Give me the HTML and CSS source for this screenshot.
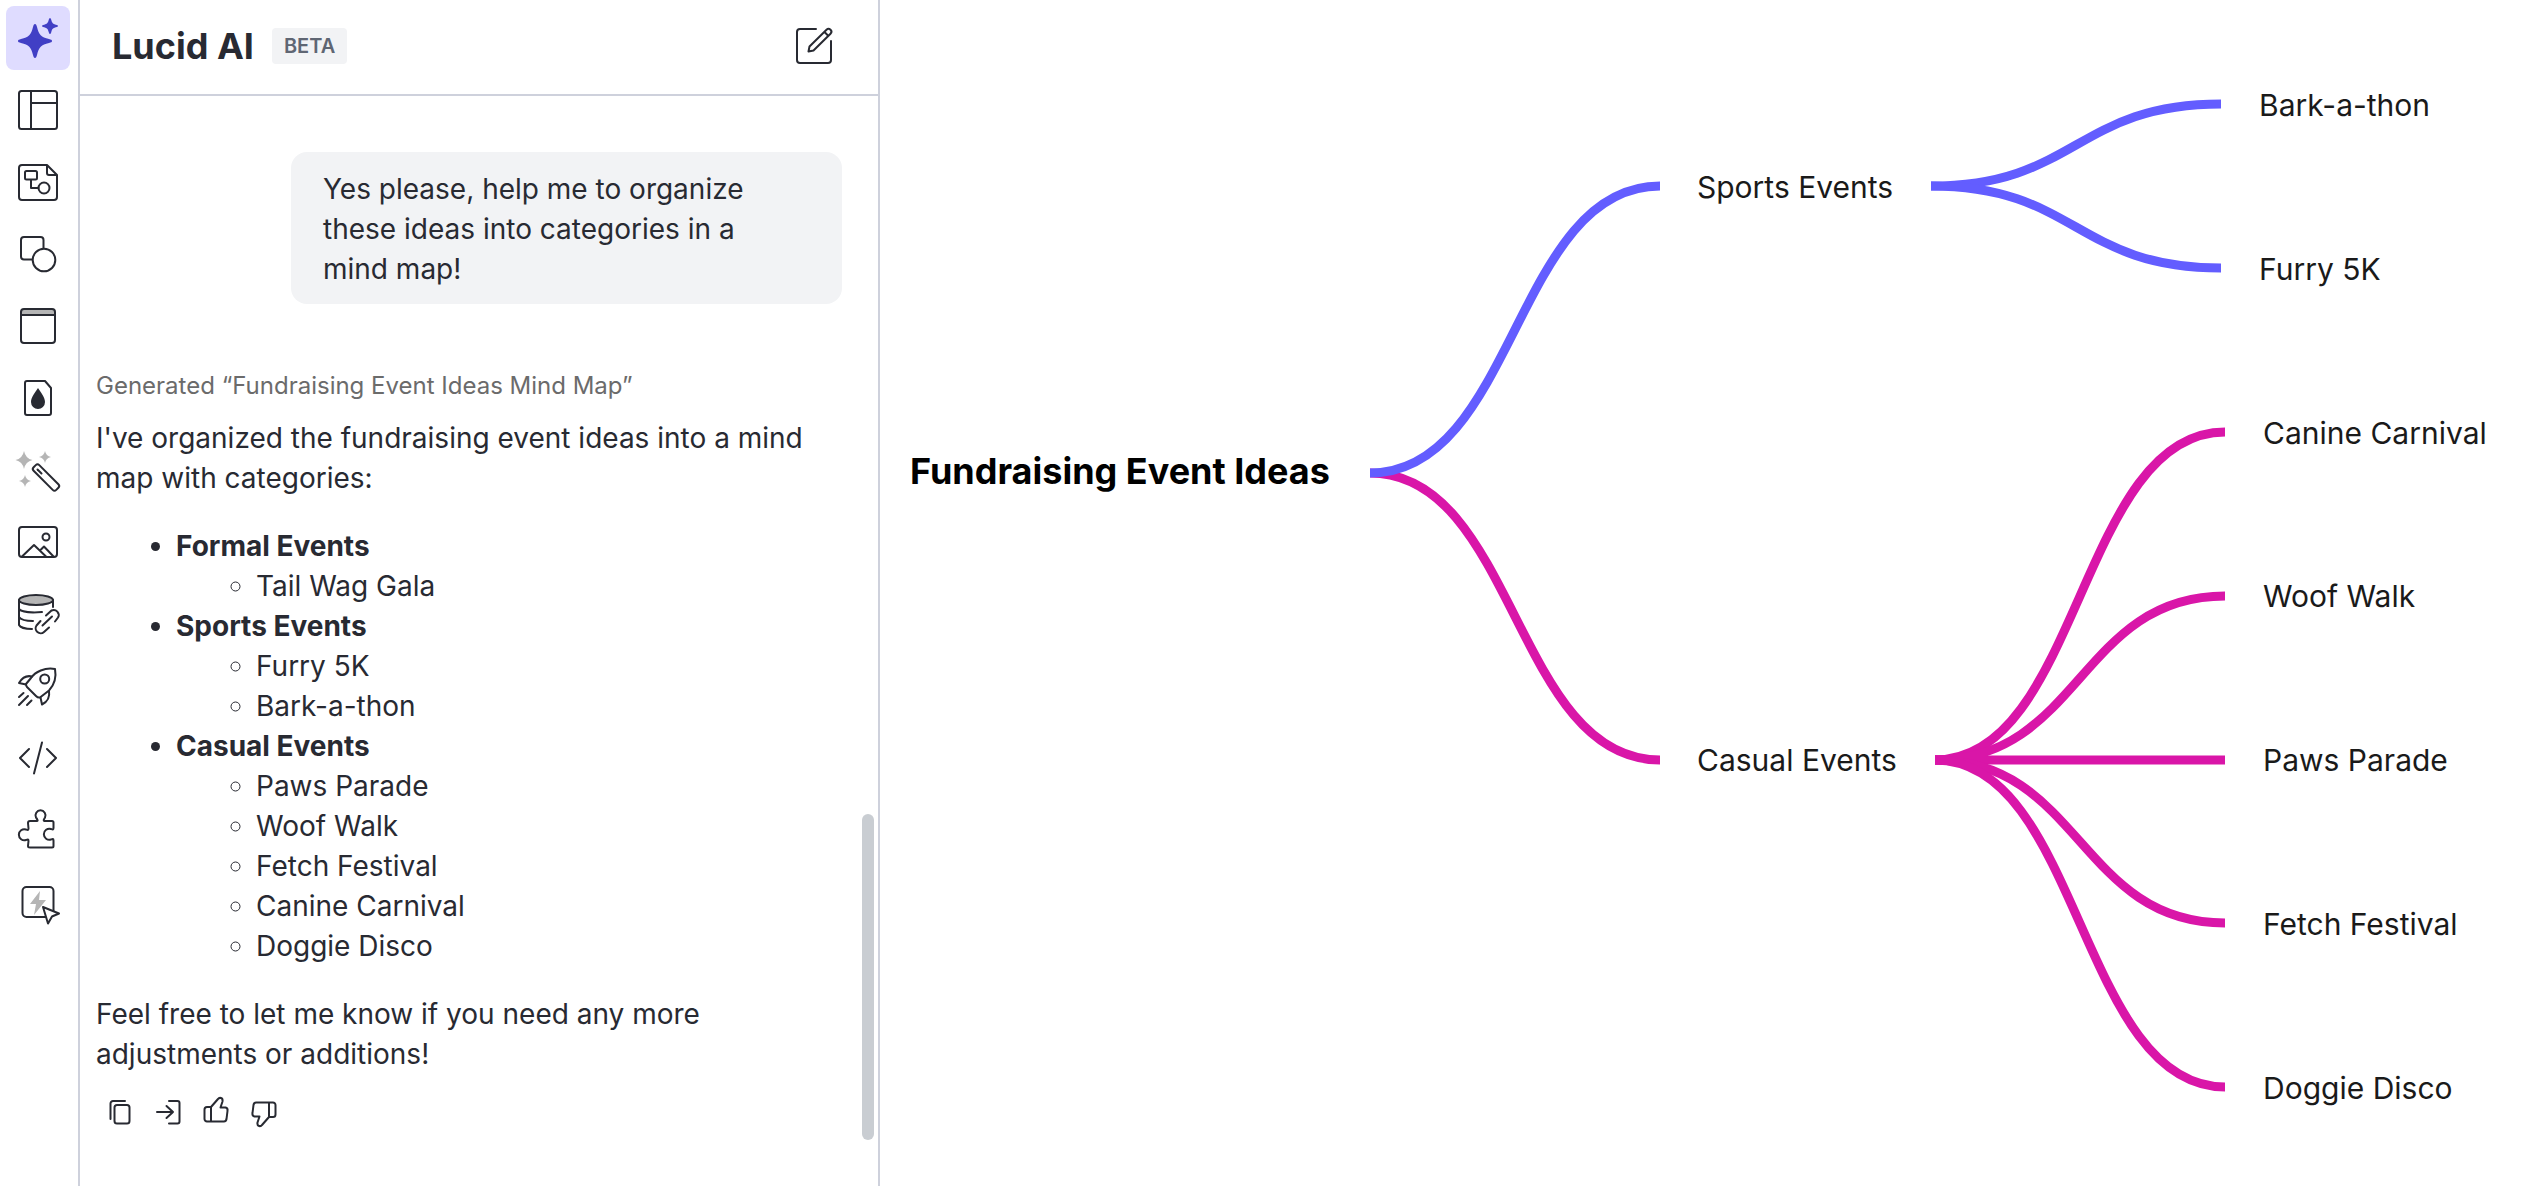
FILE: index.html
```html
<!DOCTYPE html>
<html lang="en">
<head>
    <meta charset="utf-8">
    <title>Lucid AI</title>
    <link rel="stylesheet" href="styles.css">
</head>
<body>
    <div class="app">
        <nav class="rail" aria-label="Tools">
            <button class="rail-button active" aria-label="Lucid AI">
                <svg viewBox="0 0 40 40"><path class="solid" d="M17 6c1 0 1.500 1 2 3 2 8 4 10 12 12 2 .5 3 1 3 2s-1 1.500-3 2c-8 2-10 4-12 12-.5 2-1 3-2 3s-1.500-1-2-3c-2-8-4-10-12-12-2-.5-3-1-3-2s1-1.500 3-2c8-2 10-4 12-12 .5-2 1-3 2-3z"/><path class="solid" d="M32 0c.7 0 1 1 1.300 2 .8 3 1.700 3.900 4.700 4.700 1 .3 2 .6 2 1.300s-1 1-2 1.300c-3 .8-3.900 1.700-4.700 4.700-.3 1-.6 2-1.300 2s-1-1-1.300-2c-.8-3-1.700-3.900-4.700-4.700-1-.3-2-.6-2-1.300s1-1 2-1.300c3-.8 3.900-1.700 4.700-4.700.3-1 .6-2 1.300-2z"/></svg>
            </button>
            <button class="rail-button" aria-label="Templates">
                <svg viewBox="0 0 40 40"><rect x="1" y="1" width="38" height="38" rx="2.500"/><path d="M13 1v38M13 13h26"/></svg>
            </button>
            <button class="rail-button" aria-label="Diagrams">
                <svg viewBox="0 0 40 40"><path d="M29 3H4a3 3 0 0 0-3 3v29a3 3 0 0 0 3 3h32a3 3 0 0 0 3-3V13zM29 3v8a2 2 0 0 0 2 2h8"/><rect x="7" y="9" width="12" height="8.500" rx="1.500"/><path d="M13 18v8h7.500"/><circle cx="26" cy="26" r="5.500"/></svg>
            </button>
            <button class="rail-button" aria-label="Shapes">
                <svg viewBox="0 0 40 40"><rect x="3" y="3" width="22.500" height="22.500" rx="3"/><circle class="paper" cx="26" cy="26" r="11.300"/></svg>
            </button>
            <button class="rail-button" aria-label="Frames">
                <svg viewBox="0 0 40 40"><path class="grey" d="M3 9V5l2-2h30l2 2v4z"/><rect x="3" y="3" width="34" height="34" rx="3"/><path d="M3 9h34"/></svg>
            </button>
            <button class="rail-button" aria-label="Styles">
                <svg viewBox="0 0 40 40"><path d="M27 3H9a2 2 0 0 0-2 2v30a2 2 0 0 0 2 2h22a2 2 0 0 0 2-2V10z"/><path class="solid" d="M20 10c3 5 7 9 7 14a7 7 0 0 1-14 0c0-5 4-9 7-14z"/></svg>
            </button>
            <button class="rail-button" aria-label="Magic tools">
                <svg viewBox="0 0 40 40"><path class="grey" d="M6 1q1.500 7.500 8.500 9-7 1.500-8.500 9-1.500-7.500-8.500-9 7-1.500 8.500-9zM27 1q1 5 6 6-5 1-6 6-1-5-6-6 5-1 6-6zM7 25q1 5 6 6-5 1-6 6-1-5-6-6 5-1 6-6z"/><rect x="14" y="23.500" width="32" height="8" rx="2.500" transform="rotate(45 28 27.500) translate(-2 0)"/><path d="M19.500 19.500l4 4"/></svg>
            </button>
            <button class="rail-button" aria-label="Images">
                <svg viewBox="0 0 40 40"><rect x="1" y="5" width="38" height="30" rx="3"/><circle cx="28" cy="15" r="3.500"/><path d="M4 34.500L16 23l12 11.500M22 28.500l4-4 9.500 10"/></svg>
            </button>
            <button class="rail-button" aria-label="Data">
                <svg viewBox="0 0 40 40"><ellipse class="grey-lined" cx="18" cy="6" rx="17" ry="5"/><path d="M1 6v25c1 2 6 4 13 4M35 6v7M1 15c3 3 13 4 23 3M1 23c2 3 8 4 14 4"/><path d="M28 21.500l5.500-5a5 5 0 0 1 6.500 7l-3 4M31 33.500l-5 4.500a5 5 0 0 1-7.500-6.500l4-4.500M24.500 31.500l9.500-9"/></svg>
            </button>
            <button class="rail-button" aria-label="Launch">
                <svg viewBox="0 0 40 40"><path d="M37 3C27 1 17 6 13 12L8 18q0 2 1 3l9 9q2 2 4 1.500l9-7C37 18 38.500 11 37 3z"/><circle cx="26.700" cy="13" r="4.500"/><path d="M14 10.500C8 9 4 12 1 17l7 1.500M31 25c1 6-2 11-7 13.500L22.500 31.500M5.500 27L1 31M10 30l-9 9M13.500 34.500L9 39"/></svg>
            </button>
            <button class="rail-button" aria-label="Code">
                <svg viewBox="0 0 40 40"><path d="M11 11l-9 9 9 9M29 11l9 9-9 9M24 4.500l-8 31"/></svg>
            </button>
            <button class="rail-button" aria-label="Add-ons">
                <svg viewBox="0 0 40 40"><path d="M12 11h7c1.500 0 0-2-1-3.500a5 5 0 1 1 9 0c-1 1.500-2 3.500-.5 3.500H34q1.500 0 1.500 1.500v5.500c0 2-1 1.500-2.500 1a5.500 5.500 0 1 0 0 10.500c1.500-.5 2.500-1 2.500 1v5.500q0 1.500-1.500 1.500H12q-2 0-2-1.500l.5-5c0-2-1-1.500-2.500-1a5.500 5.500 0 1 1 0-10.500c1.500.5 2.500 1 2.500-1l-.5-5.500q0-2 2-2z"/></svg>
            </button>
            <button class="rail-button" aria-label="Actions">
                <svg viewBox="0 0 40 40"><rect x="4.500" y="5" width="31" height="30" rx="4"/><path class="grey" d="M22 9L12 22h6l-2 11 12-15h-7z"/><path class="paper" d="M25 25l16 6.500-7 3-4 7z"/></svg>
            </button>
        </nav>

        <main class="chat">
            <header class="chat-header">
                <h1>Lucid AI</h1>
                <span class="badge">BETA</span>
                <button class="new-chat" aria-label="New chat">
                    <svg viewBox="0 0 36 36"><path d="M20 1H4a3 3 0 0 0-3 3v28a3 3 0 0 0 3 3h28a3 3 0 0 0 3-3V13"/><path d="M12.500 23.500l1-5L30.500 1.700a2.700 2.700 0 0 1 4 4L17.500 22.500zM28.500 4l3.700 3.700"/></svg>
                </button>
            </header>

            <div class="chat-body">
                <p class="bubble">Yes please, help me to organize these ideas into categories in a mind map!</p>

                <p class="generated">Generated “Fundraising Event Ideas Mind Map”</p>
                <div class="answer">
                    <p>I've organized the fundraising event ideas into a mind map with categories:</p>
                    <ul>
                        <li><strong>Formal Events</strong>
                            <ul>
                                <li>Tail Wag Gala</li>
                            </ul>
                        </li>
                        <li><strong>Sports Events</strong>
                            <ul>
                                <li>Furry 5K</li>
                                <li>Bark-a-thon</li>
                            </ul>
                        </li>
                        <li><strong>Casual Events</strong>
                            <ul>
                                <li>Paws Parade</li>
                                <li>Woof Walk</li>
                                <li>Fetch Festival</li>
                                <li>Canine Carnival</li>
                                <li>Doggie Disco</li>
                            </ul>
                        </li>
                    </ul>
                    <p>Feel free to let me know if you need any more adjustments or additions!</p>
                </div>

                <div class="actions">
                    <button aria-label="Copy">
                        <svg viewBox="0 0 28 28"><path d="M19 3H7a2.500 2.500 0 0 0-2.500 2.500V21"/><rect x="8.500" y="7" width="15" height="18.500" rx="2.500"/></svg>
                    </button>
                    <button aria-label="Insert">
                        <svg viewBox="0 0 28 28"><path d="M3 14h16M12.500 8l6.500 6-6.500 6M15 3h8.500a2 2 0 0 1 2 2v18.500a2 2 0 0 1-2 2H15"/></svg>
                    </button>
                    <button aria-label="Good response">
                        <svg viewBox="0 0 28 28"><path id="thumb" d="M9 9v14.500M9 9H5a2.500 2.500 0 0 0-2.500 2.500V21A2.500 2.500 0 0 0 5 23.500h17q2 0 2.500-2.500l1-8q.500-3-2-3.500h-5l2-6q.500-3-1.500-3.500T16 1z"/></svg>
                    </button>
                    <button aria-label="Bad response">
                        <svg viewBox="0 0 28 28"><use href="#thumb" transform="rotate(180 14 14)"/></svg>
                    </button>
                </div>
            </div>
            <div class="scroll-thumb"></div>
        </main>

        <section class="canvas" aria-label="Mind map">
            <svg class="links" width="1642" height="1186" viewBox="0 0 1642 1186">
                <g class="casual">
                    <path d="M490 473C635 473 635 760 780 760"/>
                    <path d="M1055 760C1200 760 1200 432 1345 432"/>
                    <path d="M1055 760C1200 760 1200 596 1345 596"/>
                    <path d="M1055 760H1345"/>
                    <path d="M1055 760C1200 760 1200 923 1345 923"/>
                    <path d="M1055 760C1200 760 1200 1087 1345 1087"/>
                </g>
                <g class="sports">
                    <path d="M490 473C635 473 635 186 780 186"/>
                    <path d="M1051 186C1196 186 1196 104 1341 104"/>
                    <path d="M1051 186C1196 186 1196 268 1341 268"/>
                </g>
            </svg>
            <div class="node root">Fundraising Event Ideas</div>
            <div class="node sports-events">Sports Events</div>
            <div class="node bark-a-thon">Bark-a-thon</div>
            <div class="node furry-5k">Furry 5K</div>
            <div class="node casual-events">Casual Events</div>
            <div class="node canine-carnival">Canine Carnival</div>
            <div class="node woof-walk">Woof Walk</div>
            <div class="node paws-parade">Paws Parade</div>
            <div class="node fetch-festival">Fetch Festival</div>
            <div class="node doggie-disco">Doggie Disco</div>
        </section>
    </div>
</body>
</html>
```
FILE: styles.css
```css
* {
    box-sizing: border-box;
}
body {
    margin: 0;
    font-family: Inter, "Liberation Sans", sans-serif;
    color: #282a32;
    background: #fff;
}
button {
    display: flex;
    align-items: center;
    justify-content: center;
    padding: 0;
    border: none;
    background: none;
    color: inherit;
    cursor: pointer;
}
svg {
    fill: none;
    stroke: currentColor;
    stroke-width: 2;
    stroke-linecap: round;
    stroke-linejoin: round;
    overflow: visible;
}
.app {
    display: flex;
    min-height: 100vh;
}

/* left toolbar */
.rail {
    flex: none;
    display: flex;
    flex-direction: column;
    gap: 8px;
    width: 80px;
    padding: 6px;
    border-right: 2px solid #ced1dc;
}
.rail-button {
    width: 64px;
    height: 64px;
    border-radius: 8px;
}
.rail-button svg {
    width: 40px;
    height: 40px;
}
.rail-button.active {
    background: #dfdcff;
    color: #413fc5;
}
.solid {
    fill: currentColor;
    stroke: none;
}
.grey {
    fill: #b5b5b5;
    stroke: none;
}
.grey-lined {
    fill: #b5b5b5;
}
.paper {
    fill: #fff;
}

/* chat panel */
.chat {
    flex: none;
    position: relative;
    width: 800px;
    border-right: 2px solid #ced1dc;
}
.chat-header {
    display: flex;
    align-items: center;
    height: 96px;
    padding: 0 46px 2px 32px;
    border-bottom: 2px solid #ced1dc;
}
.chat-header h1 {
    margin: 0;
    font-size: 36px;
    line-height: 40px;
}
.badge {
    margin-left: 18px;
    padding: 0 12px;
    border-radius: 4px;
    background: #f2f3f5;
    color: #5f6673;
    font-size: 20px;
    font-weight: 600;
    line-height: 36px;
}
.new-chat {
    margin-left: auto;
}
.new-chat svg {
    width: 36px;
    height: 36px;
}
.chat-body {
    padding: 56px 36px 48px 16px;
    font-size: 28px;
    line-height: 40px;
}
.bubble {
    width: 551px;
    margin: 0 0 62px auto;
    padding: 17px 64px 15px 32px;
    border-radius: 16px;
    background: #f2f3f5;
}
.generated {
    margin: 0 0 12px;
    color: #6b6b6b;
    font-size: 24px;
}
.answer p {
    margin: 0;
}
.answer ul {
    margin: 0;
    padding-left: 80px;
}
.answer > ul {
    margin: 28px 0;
}
.actions {
    display: flex;
    margin-top: 14px;
}
.actions button {
    width: 48px;
    height: 48px;
}
.actions svg {
    width: 28px;
    height: 28px;
}
.scroll-thumb {
    position: absolute;
    right: 4px;
    top: 814px;
    width: 12px;
    height: 326px;
    border-radius: 6px;
    background: #c9cdd2;
}

/* mind map */
.canvas {
    flex: 1;
    position: relative;
    overflow: hidden;
    min-width: 0;
}
.links {
    display: block;
    stroke-width: 9;
    stroke-linecap: butt;
}
.sports {
    stroke: #635dff;
}
.casual {
    stroke: #d916a8;
}
.node {
    position: absolute;
    color: #1a1a1a;
    font-size: 30px;
    line-height: 40px;
    white-space: nowrap;
}
.root {
    left: 30px;
    top: 451px;
    color: #000;
    font-size: 36px;
    font-weight: 700;
}
.sports-events {
    left: 817px;
    top: 167px;
}
.bark-a-thon {
    left: 1379px;
    top: 85px;
}
.furry-5k {
    left: 1379px;
    top: 249px;
}
.casual-events {
    left: 817px;
    top: 740px;
}
.canine-carnival {
    left: 1383px;
    top: 413px;
}
.woof-walk {
    left: 1383px;
    top: 576px;
}
.paws-parade {
    left: 1383px;
    top: 740px;
}
.fetch-festival {
    left: 1383px;
    top: 904px;
}
.doggie-disco {
    left: 1383px;
    top: 1068px;
}
```
